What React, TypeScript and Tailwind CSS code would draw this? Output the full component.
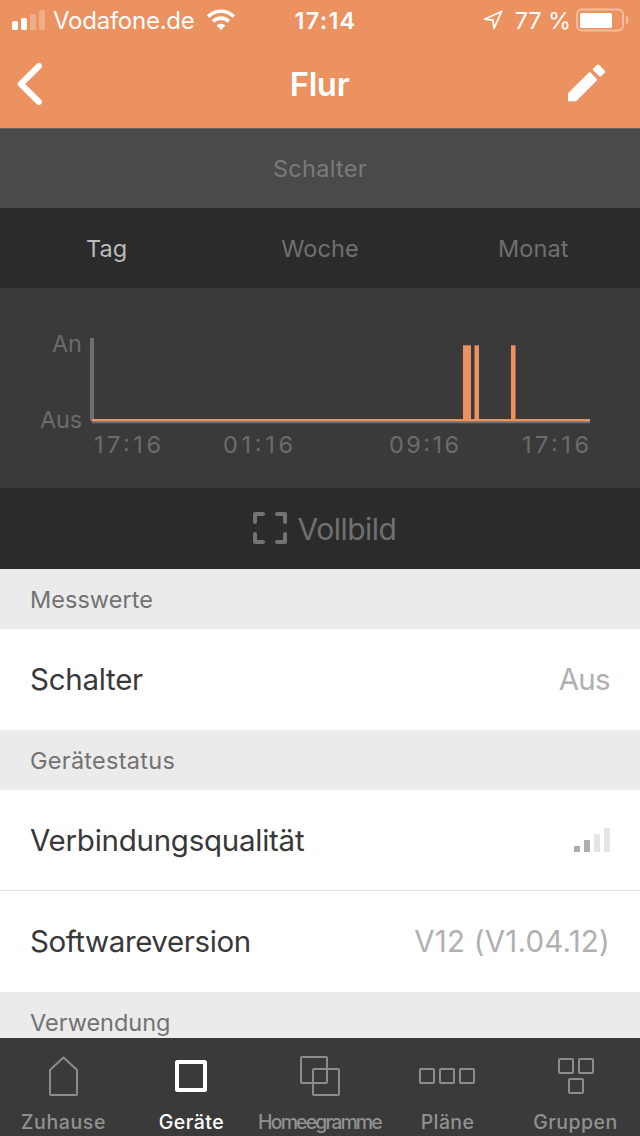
import type { ReactNode } from "react"
import { clsx } from "clsx"

const LINE = "#8c8c8c"

function StatusBar() {
  return (
    <div className="flex h-10 items-center text-white">
      <div className="flex w-[250px] items-center pl-3">
        <svg width="34" height="20" viewBox="0 0 34 20" fill="white">
          <rect x="0" y="11" width="6" height="9" rx="1.5" />
          <rect x="9" y="8" width="6" height="12" rx="1.5" />
          <rect x="18" y="4" width="6" height="16" rx="1.5" opacity="0.25" />
          <rect x="27" y="0" width="6" height="20" rx="1.5" opacity="0.25" />
        </svg>
        <span className="ml-[7px] w-[147px] whitespace-nowrap pt-0.5 text-[24px] leading-10 tracking-[-0.25px]">Vodafone.de</span>
        <svg className="ml-[6px]" width="30" height="22" viewBox="0 0 30 22" fill="none" stroke="white" strokeWidth="3.6">
          <path d="M2.2 7.6 C9.5 0.4 20.5 0.4 27.8 7.6" />
          <path d="M7 12.4 C11.5 8 18.5 8 23 12.4" />
          <path d="M15 21 L10.6 16.6 C13 14.2 17 14.2 19.4 16.6 Z" fill="white" stroke="none" />
        </svg>
      </div>
      <div className="w-[151px] pt-0.5 text-center text-[23.5px] font-semibold leading-10 tracking-[1.2px]">17:14</div>
      <div className="flex flex-1 items-center justify-end pr-[10px]">
        <svg width="22" height="22" viewBox="0 0 22 22" fill="none" stroke="white" strokeWidth="1.8" strokeLinejoin="round">
          <path d="M19.5 2.5 L12 19.5 L11 11.2 L2.5 10.2 Z" />
        </svg>
        <span className="ml-[11px] whitespace-nowrap pt-0.5 text-[23.5px] leading-10 tracking-[-0.1px]">77 %</span>
        <svg className="ml-[5px]" width="54" height="24" viewBox="0 0 54 24">
          <rect x="1" y="1.5" width="46" height="21" rx="5" fill="none" stroke="white" strokeOpacity="0.4" strokeWidth="2" />
          <rect x="4" y="5" width="32" height="15" rx="1.5" fill="white" />
          <path d="M50 8 C53.6 9.5 53.6 15 50 16.5 Z" fill="white" fillOpacity="0.4" />
        </svg>
      </div>
    </div>
  )
}

function NavBar() {
  return (
    <div className="flex h-[88px] items-center justify-between pl-4 pr-8 text-white">
      <svg width="55" height="48" viewBox="0 0 55 48" fill="none" stroke="white" strokeWidth="6" strokeLinecap="round" strokeLinejoin="round">
        <path d="M23 6 L4.8 24 L23 42" />
      </svg>
      <h1 className="text-[33px] font-semibold leading-[44px] tracking-[-0.4px]">Flur</h1>
      <svg width="40" height="40" viewBox="0 0 40 40" fill="white">
        <path d="M0 29.2 L20.9 8.6 Q21.7 7.8 22.5 8.6 L28.8 14.9 Q29.6 15.7 28.8 16.5 L8.2 37.2 H0 Z" />
        <path d="M24.4 5.4 L28.8 0.9 Q30 -0.1 31.2 0.9 L36.7 6.4 Q37.8 7.5 36.7 8.7 L32.2 13 Z" />
      </svg>
    </div>
  )
}

const ranges = ["Tag", "Woche", "Monat"]

function RangeTabs() {
  return (
    <div className="grid h-20 grid-cols-3 items-center bg-[#2b2b2b] pt-px text-center text-[23.5px] tracking-[0.1px]">
      {ranges.map((range, i) => (
        <span key={range} className={i === 0 ? "text-[#bbbbbb]" : "text-[#707070]"}>
          {range}
        </span>
      ))}
    </div>
  )
}

const pulses = [
  { x: 463, width: 8 },
  { x: 474.5, width: 4.5 },
  { x: 511, width: 4.5 },
]

const times = [
  { x: 94, label: "17:16", width: 67 },
  { x: 223, label: "01:16", width: 70 },
  { x: 389, label: "09:16", width: 70 },
  { x: 522, label: "17:16", width: 67 },
]

function Chart() {
  return (
    <svg className="block bg-[#3a3a3a]" width="640" height="200" viewBox="0 0 640 200">
      <rect x="90" y="50" width="4" height="83" fill="#6f6f6f" />
      <rect x="92" y="131" width="498" height="4.3" fill="#6f6f6f" />
      <rect x="92" y="131" width="498" height="2.3" fill="#ec9160" />
      {pulses.map((p) => (
        <rect key={p.x} x={p.x} y="57.3" width={p.width} height="75.5" fill="#ec9160" />
      ))}
      <g fill="#6c6c6c" fontSize="23.5">
        <text x="82" y="64" textAnchor="end">An</text>
        <text x="82" y="140" textAnchor="end" letterSpacing="-0.2">Aus</text>
        {times.map((t) => (
          <text key={t.x} x={t.x} y="165" textLength={t.width}>
            {t.label}
          </text>
        ))}
      </g>
    </svg>
  )
}

function SectionTitle({ children, className }: { children: ReactNode; className?: string }) {
  return (
    <div
      className={clsx(
        "h-[60px] shrink-0 bg-[#ebebeb] pl-[30px] text-[23.5px] leading-[61px] text-[#727272]",
        className,
      )}
    >
      {children}
    </div>
  )
}

interface RowProps {
  label: string
  divider?: boolean
  children: ReactNode
}

function Row({ label, divider, children }: RowProps) {
  return (
    <div
      className={clsx(
        "flex h-[101px] shrink-0 items-center justify-between bg-white px-[30px] text-[29.5px]",
        divider && "border-b border-[#dedede]",
      )}
    >
      <span className={clsx("text-[#383838]", label === "Softwareversion" ? "tracking-[-0.4px]" : "tracking-[-0.26px]")}>
        {label}
      </span>
      <span className="text-[#b0b0b0]">{children}</span>
    </div>
  )
}

function SignalBars() {
  return (
    <svg width="36" height="24" viewBox="0 0 36 24">
      <rect x="0" y="18" width="6" height="6" fill="#adadad" />
      <rect x="10" y="12" width="6" height="12" fill="#adadad" />
      <rect x="20" y="6" width="6" height="18" fill="#e5e5e5" />
      <rect x="30" y="0" width="6" height="24" fill="#e5e5e5" />
    </svg>
  )
}

const tabs = [
  {
    label: "Zuhause",
    style: "tracking-[0.6px]",
    icon: <path d="M18 16 L31.5 3.5 L45 16 V40 Q45 41 44 41 H19 Q18 41 18 40 Z" />,
  },
  {
    label: "Geräte",
    style: "tracking-[0.5px]",
    icon: <rect x="17" y="8" width="28" height="28" rx="0.5" stroke="white" strokeWidth="4" />,
  },
  {
    label: "Homeegramme",
    style: "tracking-[-1.85px]",
    icon: (
      <>
        <rect x="13" y="3" width="26" height="26" rx="1" />
        <rect x="25" y="15" width="26" height="26" rx="1" />
      </>
    ),
  },
  {
    label: "Pläne",
    style: "tracking-[0.4px]",
    icon: (
      <>
        <rect x="4" y="15" width="14" height="14" rx="1" />
        <rect x="24" y="15" width="14" height="14" rx="1" />
        <rect x="44" y="15" width="14" height="14" rx="1" />
      </>
    ),
  },
  {
    label: "Gruppen",
    style: "tracking-[0.45px]",
    icon: (
      <>
        <rect x="15" y="5" width="14" height="14" rx="1" />
        <rect x="35" y="5" width="14" height="14" rx="1" />
        <rect x="25" y="25" width="14" height="14" rx="1" />
      </>
    ),
  },
]

function TabBar() {
  return (
    <nav className="grid h-[98px] shrink-0 grid-cols-5 bg-[#3a3a3a] pt-4">
      {tabs.map((tab) => (
        <div key={tab.label} className="flex flex-col items-center">
          <svg width="64" height="44" viewBox="0 0 64 44" fill="none" stroke={LINE} strokeWidth="2" strokeLinejoin="round">
            {tab.icon}
          </svg>
          <span
            className={clsx(
              "mt-[9px] whitespace-nowrap pr-px text-[19.5px] font-medium leading-[30px]",
              tab.style,
              tab.label === "Geräte" ? "text-white" : "text-[#919191]",
            )}
          >
            {tab.label}
          </span>
        </div>
      ))}
    </nav>
  )
}

export default function App() {
  return (
    <div className="flex h-[1136px] w-[640px] flex-col overflow-hidden bg-[#ebebeb] font-[Inter,sans-serif]">
      <header className="h-32 shrink-0 bg-[#ec9160]">
        <StatusBar />
        <NavBar />
      </header>
      <section className="shrink-0">
        <div className="h-20 border-t border-[#656565] bg-[#4a4a4a] text-center text-[23.5px] leading-20 tracking-[0.3px] text-[#7a7a7a]">
          Schalter
        </div>
        <RangeTabs />
        <Chart />
        <button className="flex h-[81px] w-full items-center justify-center bg-[#2b2b2b] pb-px pl-[9px] text-[30px] text-[#707070]">
          <svg width="34" height="32" viewBox="0 0 34 32" fill="none" stroke="#737373" strokeWidth="4" strokeLinecap="round" strokeLinejoin="round">
            <path d="M2 10 V2 H10 M24 2 H32 V10 M32 22 V30 H24 M10 30 H2 V22" />
          </svg>
          <span className="ml-[11px] pt-0.5 tracking-[-0.5px]">Vollbild</span>
        </button>
      </section>
      <main className="flex min-h-0 flex-1 flex-col overflow-hidden">
        <SectionTitle className="tracking-[0.03px]">Messwerte</SectionTitle>
        <Row label="Schalter">
          <span className="tracking-[-0.7px]">Aus</span>
        </Row>
        <SectionTitle className="tracking-[0.27px]">Gerätestatus</SectionTitle>
        <Row label="Verbindungsqualität" divider>
          <SignalBars />
        </Row>
        <Row label="Softwareversion">
          <span className="tracking-[0.2px]">V12 (V1.04.12)</span>
        </Row>
        <SectionTitle className="tracking-[-0.03px]">Verwendung</SectionTitle>
      </main>
      <TabBar />
    </div>
  )
}
